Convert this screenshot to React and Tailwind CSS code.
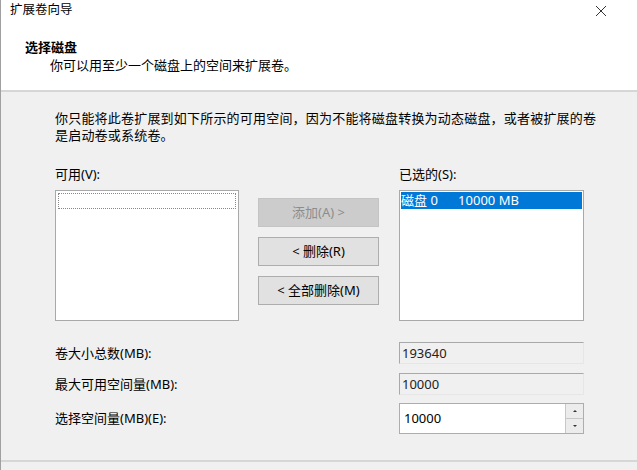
import React from 'react';

const font = { fontFamily: '"Noto Sans", "Noto Sans CJK SC", sans-serif' };

function CloseIcon() {
  return (
    <svg width="12" height="12" viewBox="0 0 12 12" className="text-[#333]">
      <path d="M1 1 L11 11 M11 1 L1 11" stroke="currentColor" strokeWidth="1" fill="none" />
    </svg>
  );
}

function WizButton({ children, disabled }) {
  return (
    <div
      className={`h-[29px] w-[121px] flex items-center justify-center border text-[13px] leading-none ${
        disabled
          ? 'bg-[#cccccc] border-[#c4c4c4] text-[#8c8c8c]'
          : 'bg-[#e1e1e1] border-[#adadad] text-black'
      }`}
    >
      {children}
    </div>
  );
}

function ReadField({ value }) {
  return (
    <div className="w-[185px] h-[22px] flex items-center pl-[2px] border-t border-l border-[#a9a9a9] border-r border-b border-r-[#e6e6e6] border-b-[#e6e6e6] text-[13px] leading-[17px] text-[#222]">
      {value}
    </div>
  );
}

function SpinField({ value }) {
  return (
    <div className="w-[185px] h-[31px] flex bg-white border border-[#adadad]">
      <div className="flex-1 flex items-center pl-[4px] text-[13px] leading-[17px] text-black">{value}</div>
      <div className="w-[18px] flex flex-col border-l border-[#c8c8c8]">
        <div className="flex-1 flex items-center justify-center bg-[#ececec] border-b border-[#c8c8c8]">
          <span className="w-0 h-0 border-l-[2px] border-r-[2px] border-b-[2px] border-l-transparent border-r-transparent border-b-[#333]" />
        </div>
        <div className="flex-1 flex items-center justify-center bg-[#ececec]">
          <span className="w-0 h-0 border-l-[2px] border-r-[2px] border-t-[2px] border-l-transparent border-r-transparent border-t-[#333]" />
        </div>
      </div>
    </div>
  );
}

export default function App() {
  return (
    <div style={font} className="w-[637px] h-[470px] bg-[#f0f0f0] overflow-hidden border-l border-[#a0a0a0] text-black">
      {/* Header */}
      <div className="h-[92px] bg-white border-b-2 border-[#d6d6d6]">
        <div className="h-[21px] flex items-center justify-between pl-[9px] pr-[30px]">
          <span className="text-[12.5px] leading-none">扩展卷向导</span>
          <CloseIcon />
        </div>
        <div className="mt-[17px] pl-[24px] text-[13px] leading-[18px] font-bold">选择磁盘</div>
        <div className="pl-[49px] text-[13px] leading-[18px]">你可以用至少一个磁盘上的空间来扩展卷。</div>
      </div>

      {/* Body */}
      <div className="pl-[54px]">
        <p className="mt-[18px] w-[548px] text-[13px] leading-[17px] tracking-[0.2px]">
          你只能将此卷扩展到如下所示的可用空间，因为不能将磁盘转换为动态磁盘，或者被扩展的卷是启动卷或系统卷。
        </p>

        <div className="mt-[22px] flex items-start">
          <div className="w-[184px]">
            <div className="h-[17px] text-[13px] leading-[17px]">可用(V):</div>
            <div className="mt-[7px] h-[131px] bg-white border border-[#a9a9a9] p-[2px]">
              <div className="h-[16px] border border-dotted border-[#888]" />
            </div>
          </div>

          <div className="ml-[19px] mt-[32px] flex flex-col gap-[10px]">
            <WizButton disabled>添加(A) &gt;</WizButton>
            <WizButton>&lt; 删除(R)</WizButton>
            <WizButton>&lt; 全部删除(M)</WizButton>
          </div>

          <div className="ml-[20px] w-[185px]">
            <div className="h-[17px] text-[13px] leading-[17px]">已选的(S):</div>
            <div className="mt-[7px] h-[131px] bg-white border border-[#a9a9a9] pt-[1px] px-[1px]">
              <div className="h-[17px] bg-[#0078d7] text-white text-[13px] leading-[17px] whitespace-pre">
                磁盘 0      10000 MB
              </div>
            </div>
          </div>
        </div>

        <div className="mt-[21px] flex flex-col gap-[9px]">
          <div className="flex items-center">
            <span className="w-[344px] text-[13px] leading-[17px]">卷大小总数(MB):</span>
            <ReadField value="193640" />
          </div>
          <div className="flex items-center">
            <span className="w-[344px] text-[13px] leading-[17px]">最大可用空间量(MB):</span>
            <ReadField value="10000" />
          </div>
          <div className="flex items-center -mt-[1px]">
            <span className="w-[344px] text-[13px] leading-[17px]">选择空间量(MB)(E):</span>
            <SpinField value="10000" />
          </div>
        </div>
      </div>

      <div className="mt-[26px] border-t-2 border-[#d6d6d6]" />
    </div>
  );
}
